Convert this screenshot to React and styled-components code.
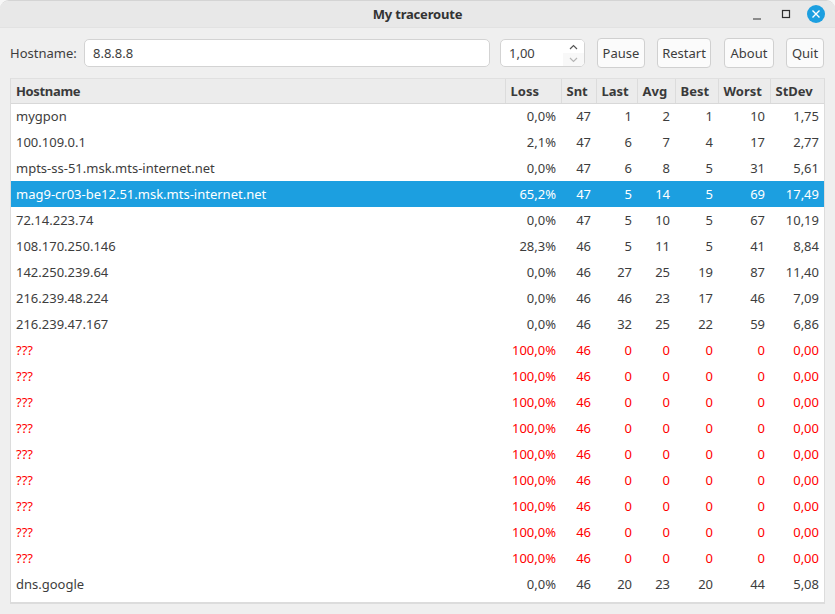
import styled, { createGlobalStyle } from 'styled-components';

const GlobalStyle = createGlobalStyle`
  html, body {
    margin: 0;
    padding: 0;
    background: #f7f7f7;
  }
  * {
    box-sizing: border-box;
  }
`;

const Window = styled.div`
  width: 835px;
  height: 614px;
  display: flex;
  flex-direction: column;
  background: #efefef;
  border-top: 1px solid #d4d4d4;
  border-radius: 9px 9px 0 0;
  overflow: hidden;
  font-family: 'Noto Sans', 'Open Sans', sans-serif;
  font-size: 13px;
  color: #3d3d3d;
`;

const TitleBar = styled.div`
  height: 27px;
  flex: none;
  display: grid;
  grid-template-columns: 1fr auto 1fr;
  align-items: center;
  background: #e8e8e8;
  border-bottom: 1px solid #e2e2e2;
`;

const Title = styled.div`
  grid-column: 2;
  font-size: 13px;
  font-weight: 700;
  letter-spacing: -0.2px;
  color: #333;
`;

const WindowControls = styled.div`
  grid-column: 3;
  display: flex;
  align-items: center;
  justify-content: flex-end;
  gap: 13px;
  padding-right: 10px;
`;

const ControlIcon = styled.svg`
  width: 16px;
  height: 16px;
  display: block;
`;

const CloseCircle = styled.div`
  width: 18px;
  height: 18px;
  border-radius: 50%;
  background: #1c9fe0;
  display: flex;
  align-items: center;
  justify-content: center;
`;

const Toolbar = styled.div`
  display: flex;
  align-items: center;
  height: 50px;
  flex: none;
  padding: 0 11px 0 10px;
`;

const FieldLabel = styled.label`
  width: 74px;
  flex: none;
`;

const HostInput = styled.div`
  width: 406px;
  height: 28px;
  flex: none;
  display: flex;
  align-items: center;
  padding: 0 8px;
  background: #fff;
  border: 1px solid #d3d3d3;
  border-radius: 5px;
`;

const Spin = styled.div`
  position: relative;
  width: 85px;
  height: 28px;
  flex: none;
  margin: 0 12px 0 10px;
  display: flex;
  align-items: center;
  padding: 0 8px;
  background: #fff;
  border: 1px solid #d3d3d3;
  border-radius: 5px;
  overflow: hidden;
`;

const SpinArrows = styled.div`
  position: absolute;
  right: 0;
  top: 0;
  bottom: 0;
  width: 21px;
  display: flex;
  flex-direction: column;
`;

const SpinStep = styled.div`
  flex: 1;
  display: flex;
  align-items: center;
  justify-content: center;
  background: ${(p) => (p.$dim ? '#f8f8f8' : '#fff')};
`;

const Arrow = styled.svg`
  width: 9px;
  height: 6px;
  display: block;
  stroke: ${(p) => (p.$dim ? '#b5b5b5' : '#555')};
`;

const Button = styled.button`
  height: 30px;
  width: ${(p) => p.$w}px;
  flex: none;
  margin-right: ${(p) => p.$gap}px;
  padding: 0;
  background: #fbfbfb;
  border: 1px solid #d0d0d0;
  border-radius: 4px;
  font: inherit;
  color: #3d3d3d;
`;

const TablePanel = styled.div`
  margin: 0 10px 10px 10px;
  flex: 1;
  background: #fff;
  border: 1px solid #dcdcdc;
  border-top: 1px solid #e0e0e0;
  border-bottom: 2px solid #dcdcdc;
  overflow: hidden;
`;

const Table = styled.table`
  width: 813px;
  table-layout: fixed;
  border-collapse: collapse;
`;

const HeadCell = styled.th`
  height: 24px;
  padding: 0 5px;
  background: #ececec;
  border-right: 1px solid #dcdcdc;
  border-bottom: 1px solid #d8d8d8;
  font-size: 13px;
  font-weight: 700;
  text-align: left;
  color: #3a3a3a;
  &:first-child {
    letter-spacing: -0.35px;
  }
  &:last-child {
    border-right: none;
  }
`;

const Row = styled.tr`
  height: 26px;
  background: ${(p) => (p.$selected ? '#1c9fe0' : '#fff')};
  color: ${(p) => (p.$selected ? '#fff' : p.$lost ? '#ff0000' : '#3d3d3d')};
`;

const Cell = styled.td`
  padding: 0 5px;
  text-align: ${(p) => (p.$left ? 'left' : 'right')};
  white-space: nowrap;
  overflow: hidden;
`;

const columns = [
  { name: 'Hostname', width: 494 },
  { name: 'Loss', width: 56 },
  { name: 'Snt', width: 35 },
  { name: 'Last', width: 41 },
  { name: 'Avg', width: 38 },
  { name: 'Best', width: 43 },
  { name: 'Worst', width: 52 },
  { name: 'StDev', width: 54 },
];

const lost = ['???', '100,0%', '46', '0', '0', '0', '0', '0,00'];

const rows = [
  ['mygpon', '0,0%', '47', '1', '2', '1', '10', '1,75'],
  ['100.109.0.1', '2,1%', '47', '6', '7', '4', '17', '2,77'],
  ['mpts-ss-51.msk.mts-internet.net', '0,0%', '47', '6', '8', '5', '31', '5,61'],
  ['mag9-cr03-be12.51.msk.mts-internet.net', '65,2%', '47', '5', '14', '5', '69', '17,49'],
  ['72.14.223.74', '0,0%', '47', '5', '10', '5', '67', '10,19'],
  ['108.170.250.146', '28,3%', '46', '5', '11', '5', '41', '8,84'],
  ['142.250.239.64', '0,0%', '46', '27', '25', '19', '87', '11,40'],
  ['216.239.48.224', '0,0%', '46', '46', '23', '17', '46', '7,09'],
  ['216.239.47.167', '0,0%', '46', '32', '25', '22', '59', '6,86'],
  lost, lost, lost, lost, lost, lost, lost, lost, lost,
  ['dns.google', '0,0%', '46', '20', '23', '20', '44', '5,08'],
];

const App = () => (
  <Window>
    <GlobalStyle />
    <TitleBar>
      <Title>My traceroute</Title>
      <WindowControls>
        <ControlIcon viewBox="0 0 16 16">
          <path d="M4 13h8" stroke="#2e2e2e" strokeWidth="1.2" fill="none" />
        </ControlIcon>
        <ControlIcon viewBox="0 0 16 16">
          <rect x="4.5" y="4.5" width="7" height="7" stroke="#2e2e2e" strokeWidth="1.2" fill="none" />
        </ControlIcon>
        <CloseCircle>
          <svg width="10" height="10" viewBox="0 0 10 10">
            <path d="M1.5 1.5l7 7M8.5 1.5l-7 7" stroke="#fff" strokeWidth="1.4" fill="none" />
          </svg>
        </CloseCircle>
      </WindowControls>
    </TitleBar>
    <Toolbar>
      <FieldLabel>Hostname:</FieldLabel>
      <HostInput>8.8.8.8</HostInput>
      <Spin>
        1,00
        <SpinArrows>
          <SpinStep>
            <Arrow viewBox="0 0 9 6">
              <path d="M1 5l3.5-3.5L8 5" fill="none" strokeWidth="1.2" />
            </Arrow>
          </SpinStep>
          <SpinStep $dim>
            <Arrow $dim viewBox="0 0 9 6">
              <path d="M1 1l3.5 3.5L8 1" fill="none" strokeWidth="1.2" />
            </Arrow>
          </SpinStep>
        </SpinArrows>
      </Spin>
      <Button $w={48} $gap={12}>Pause</Button>
      <Button $w={54} $gap={13}>Restart</Button>
      <Button $w={50} $gap={12}>About</Button>
      <Button $w={38} $gap={0}>Quit</Button>
    </Toolbar>
    <TablePanel>
      <Table>
        <colgroup>
          {columns.map((c) => (
            <col key={c.name} width={c.width} />
          ))}
        </colgroup>
        <thead>
          <tr>
            {columns.map((c) => (
              <HeadCell key={c.name}>{c.name}</HeadCell>
            ))}
          </tr>
        </thead>
        <tbody>
          {rows.map((r, i) => (
            <Row key={i} $selected={i === 3} $lost={r === lost}>
              {r.map((v, j) => (
                <Cell key={j} $left={j === 0}>{v}</Cell>
              ))}
            </Row>
          ))}
        </tbody>
      </Table>
    </TablePanel>
  </Window>
);

export default App;
